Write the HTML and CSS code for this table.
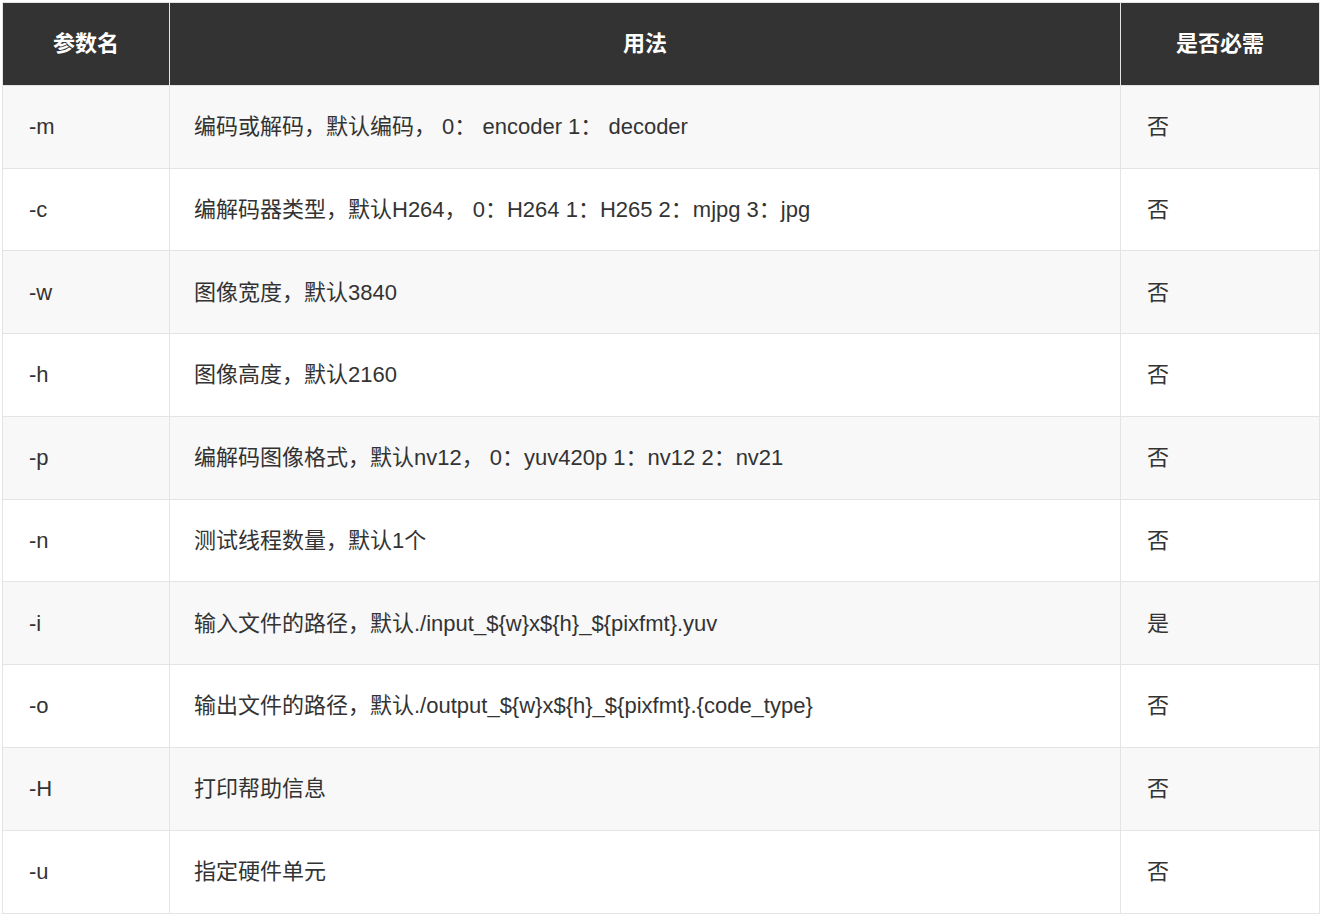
FILE: index.html
```html
<!DOCTYPE html>
<html lang="zh">
<head>
<meta charset="utf-8">
<title>参数</title>
<link rel="stylesheet" href="styles.css">
</head>
<body>
<table class="params">
  <colgroup>
    <col class="c1"><col class="c2"><col class="c3">
  </colgroup>
  <thead>
    <tr><th>参数名</th><th>用法</th><th>是否必需</th></tr>
  </thead>
  <tbody>
    <tr><td>-m</td><td>编码或解码，默认编码， 0： encoder 1： decoder</td><td>否</td></tr>
    <tr><td>-c</td><td>编解码器类型，默认H264， 0：H264 1：H265 2：mjpg 3：jpg</td><td>否</td></tr>
    <tr><td>-w</td><td>图像宽度，默认3840</td><td>否</td></tr>
    <tr><td>-h</td><td>图像高度，默认2160</td><td>否</td></tr>
    <tr><td>-p</td><td>编解码图像格式，默认nv12， 0：yuv420p 1：nv12 2：nv21</td><td>否</td></tr>
    <tr><td>-n</td><td>测试线程数量，默认1个</td><td>否</td></tr>
    <tr><td>-i</td><td>输入文件的路径，默认./input_${w}x${h}_${pixfmt}.yuv</td><td>是</td></tr>
    <tr><td>-o</td><td>输出文件的路径，默认./output_${w}x${h}_${pixfmt}.{code_type}</td><td>否</td></tr>
    <tr><td>-H</td><td>打印帮助信息</td><td>否</td></tr>
    <tr><td>-u</td><td>指定硬件单元</td><td>否</td></tr>
  </tbody>
</table>
</body>
</html>
```

FILE: styles.css
```css
html, body {
  margin: 0;
  padding: 0;
  background: #ffffff;
}
body {
  padding: 2px;
  font-family: "Liberation Sans", Arial, "Noto Sans CJK SC", sans-serif;
  color: #333333;
}
.params {
  border-collapse: collapse;
  width: 1317px;
  table-layout: fixed;
  font-size: 22px;
}
.c1 { width: 167px; }
.c2 { width: 951px; }
.c3 { width: 199px; }
.params th,
.params td {
  border: 1px solid #e4e4e4;
  padding: 26.2px 26px 25.6px;
  line-height: 30px;
  text-align: left;
  vertical-align: middle;
  white-space: nowrap;
}
.params td:nth-child(2) {
  padding-left: 24px;
}
.params th {
  background: #333333;
  color: #ffffff;
  font-weight: bold;
  text-align: center;
  border-color: #e4e4e4;
}
.params tbody tr:nth-child(odd) td {
  background: #f8f8f8;
}
.params tbody tr:nth-child(even) td {
  background: #ffffff;
}
```
